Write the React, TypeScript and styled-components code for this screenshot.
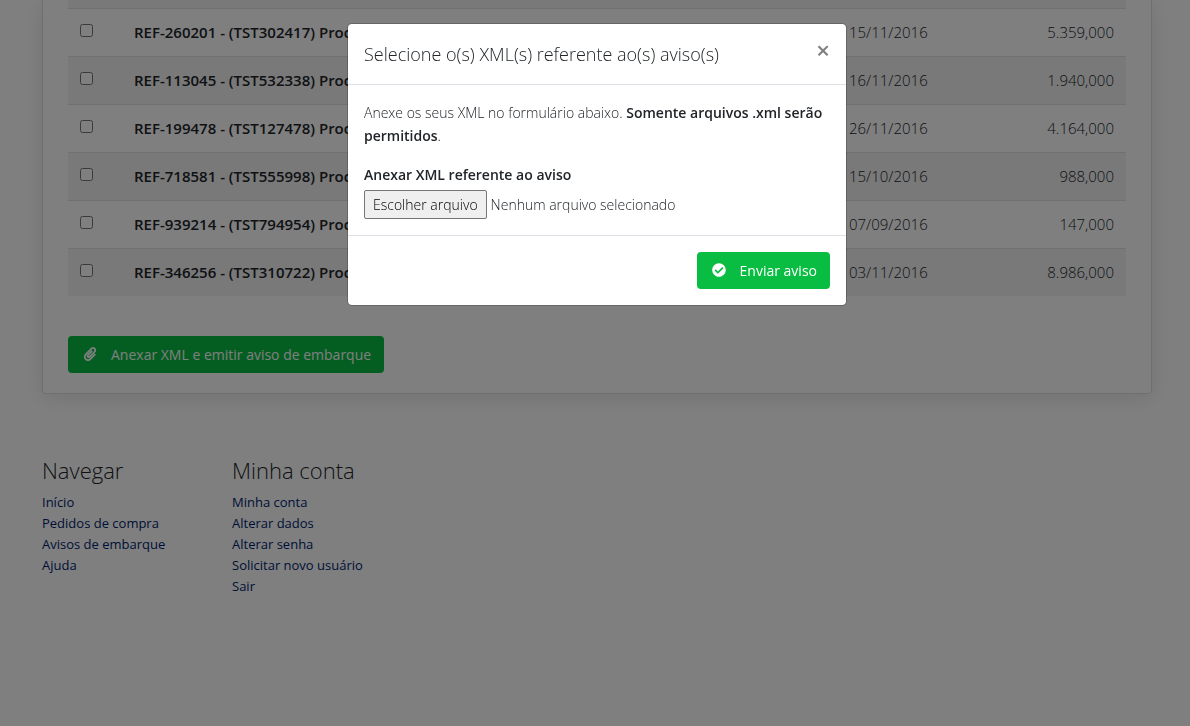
import React from 'react';
import styled, { createGlobalStyle } from 'styled-components';
import { FaCheckCircle, FaPaperclip } from 'react-icons/fa';

const GlobalStyle = createGlobalStyle`
  *, *::before, *::after { box-sizing: border-box; }
  html, body, #root { min-height: 100%; }
  html { height: 100%; }
  body {
    margin: 0;
    background: #fff;
    color: #212529;
    font-family: 'Open Sans', 'Noto Sans', sans-serif;
    font-size: 14px;
    font-weight: 300;
    line-height: 23px;
    overflow: hidden;
  }
`;

const Page = styled.div`
  padding: 0 38px 0 42px;
`;

const Card = styled.section`
  padding: 0 25px 20px;
  border: 1px solid #dfdfdf;
  border-top: 0;
  border-radius: 0 0 4px 4px;
  box-shadow: 0 4px 20px rgba(0, 0, 0, 0.1);
`;

const Table = styled.table`
  width: 100%;
  margin-bottom: 40px;
  border-collapse: collapse;
  table-layout: fixed;
`;

const HeadSpacer = styled.th`
  height: 8px;
  padding: 0;
  background: #f2f2f2;
`;

const Row = styled.tr`
  &:nth-child(even) { background: #f2f2f2; }
`;

const Cell = styled.td<{ $strong?: boolean; $right?: boolean }>`
  height: 48px;
  padding: 0 12px;
  border-top: 1px solid #dee2e6;
  vertical-align: middle;
  white-space: nowrap;
  text-align: ${({ $right }) => ($right ? 'right' : 'left')};
  font-size: 15px;
  font-weight: ${({ $strong }) => ($strong ? 600 : 300)};
`;

const Check = styled.input`
  display: block;
  width: 13px;
  height: 13px;
  margin: 0 0 3px;
`;

const Button = styled.button`
  display: inline-flex;
  align-items: center;
  gap: 12px;
  height: 37px;
  padding: 0 13px 1px;
  border: 0;
  border-radius: 4px;
  background: #08bd42;
  color: #fff;
  font: inherit;
  font-weight: 400;
  white-space: nowrap;
  svg { width: 18px; height: 14px; }
`;

const Footer = styled.footer`
  display: flex;
  padding-top: 62px;
`;

const FooterColumn = styled.nav`
  width: 190px;
`;

const FooterTitle = styled.h2`
  margin: 0 0 8px;
  font-size: 22px;
  font-weight: 300;
  line-height: 28px;
`;

const FooterList = styled.ul`
  margin: 0;
  padding: 0;
  list-style: none;
  font-size: 13px;
  font-weight: 400;
  line-height: 21px;
`;

const FooterLink = styled.a`
  color: #001e6e;
  text-decoration: none;
`;

const Backdrop = styled.div`
  position: fixed;
  inset: 0;
  display: flex;
  align-items: flex-start;
  justify-content: center;
  padding: 23px 0 0 4px;
  background: rgba(0, 0, 0, 0.5);
`;

const Modal = styled.div`
  width: 100%;
  max-width: 500px;
  border: 1px solid rgba(0, 0, 0, 0.2);
  border-radius: 5px;
  background: #fff;
  background-clip: padding-box;
`;

const ModalHeader = styled.header`
  display: flex;
  align-items: flex-start;
  justify-content: space-between;
  padding: 16px;
  border-bottom: 1px solid #dee2e6;
`;

const ModalTitle = styled.h1`
  margin: 0;
  font-size: 18px;
  font-weight: 300;
  line-height: 28px;
`;

const CloseButton = styled.button`
  height: 20px;
  padding: 0;
  border: 0;
  background: none;
  color: #7f7f7f;
  font: inherit;
  font-size: 24px;
  font-weight: 600;
  line-height: 20px;
`;

const ModalBody = styled.div`
  padding: 16px;
`;

const Intro = styled.p`
  margin: 0 0 16px;
`;

const Strong = styled.strong`
  font-weight: 600;
`;

const FieldLabel = styled.label`
  display: block;
  margin-bottom: 4px;
  font-weight: 600;
`;

const FilePicker = styled.label`
  position: relative;
  display: flex;
  align-items: center;
  gap: 4px;
`;

const FileInput = styled.input`
  position: absolute;
  inset: 0;
  width: 100%;
  opacity: 0;
`;

const FileAction = styled.span`
  height: 29px;
  padding: 2px 8px;
  border: 1px solid #767676;
  border-radius: 2px;
  background: #efefef;
  color: #000;
`;

const ModalFooter = styled.footer`
  display: flex;
  justify-content: flex-end;
  padding: 16px;
  border-top: 1px solid #dee2e6;
`;

const items = [
  { name: 'REF-260201 - (TST302417) Produto', date: '15/11/2016', amount: '5.359,000' },
  { name: 'REF-113045 - (TST532338) Produto', date: '16/11/2016', amount: '1.940,000' },
  { name: 'REF-199478 - (TST127478) Produto', date: '26/11/2016', amount: '4.164,000' },
  { name: 'REF-718581 - (TST555998) Produto', date: '15/10/2016', amount: '988,000' },
  { name: 'REF-939214 - (TST794954) Produto', date: '07/09/2016', amount: '147,000' },
  { name: 'REF-346256 - (TST310722) Produto', date: '03/11/2016', amount: '8.986,000' },
];

const menus = [
  { title: 'Navegar', links: ['Início', 'Pedidos de compra', 'Avisos de embarque', 'Ajuda'] },
  {
    title: 'Minha conta',
    links: ['Minha conta', 'Alterar dados', 'Alterar senha', 'Solicitar novo usuário', 'Sair'],
  },
];

export default function App() {
  return (
    <>
      <GlobalStyle />
      <Page>
        <Card>
          <Table>
            <colgroup>
              <col style={{ width: 54 }} />
              <col />
              <col style={{ width: 160 }} />
              <col style={{ width: 129 }} />
            </colgroup>
            <thead>
              <tr>
                <HeadSpacer colSpan={4} />
              </tr>
            </thead>
            <tbody>
              {items.map((item) => (
                <Row key={item.name}>
                  <Cell>
                    <Check type="checkbox" aria-label={item.name} />
                  </Cell>
                  <Cell $strong>{item.name}</Cell>
                  <Cell>{item.date}</Cell>
                  <Cell $right>{item.amount}</Cell>
                </Row>
              ))}
            </tbody>
          </Table>
          <Button type="button">
            <FaPaperclip />
            Anexar XML e emitir aviso de embarque
          </Button>
        </Card>
        <Footer>
          {menus.map((menu) => (
            <FooterColumn key={menu.title} aria-label={menu.title}>
              <FooterTitle>{menu.title}</FooterTitle>
              <FooterList>
                {menu.links.map((link) => (
                  <li key={link}>
                    <FooterLink href="#">{link}</FooterLink>
                  </li>
                ))}
              </FooterList>
            </FooterColumn>
          ))}
        </Footer>
      </Page>
      <Backdrop>
        <Modal role="dialog" aria-modal="true" aria-labelledby="modal-title">
          <ModalHeader>
            <ModalTitle id="modal-title">Selecione o(s) XML(s) referente ao(s) aviso(s)</ModalTitle>
            <CloseButton type="button" aria-label="Fechar">×</CloseButton>
          </ModalHeader>
          <ModalBody>
            <Intro>
              Anexe os seus XML no formulário abaixo.{' '}
              <Strong>Somente arquivos .xml serão permitidos</Strong>.
            </Intro>
            <FieldLabel htmlFor="xml-file">Anexar XML referente ao aviso</FieldLabel>
            <FilePicker>
              <FileInput id="xml-file" type="file" accept=".xml" />
              <FileAction>Escolher arquivo</FileAction>
              <span>Nenhum arquivo selecionado</span>
            </FilePicker>
          </ModalBody>
          <ModalFooter>
            <Button type="button">
              <FaCheckCircle />
              Enviar aviso
            </Button>
          </ModalFooter>
        </Modal>
      </Backdrop>
    </>
  );
}
